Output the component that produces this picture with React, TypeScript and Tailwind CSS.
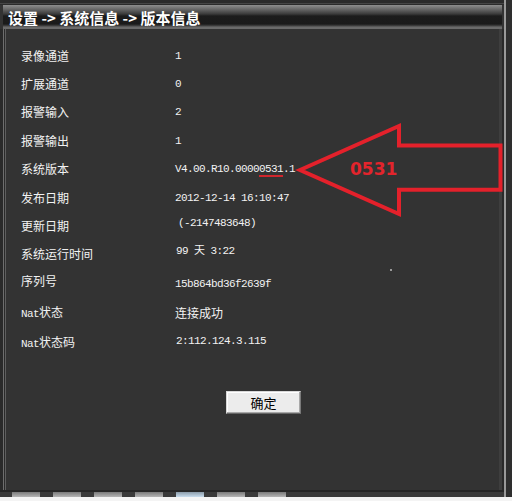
import React from "react";

type Row = {
  label: React.ReactNode;
  value: React.ReactNode;
  mt: string;
  vShift?: string;
  cjkValue?: boolean;
};

const Nat = ({ rest }: { rest: string }) => (
  <>
    <span className="font-['Liberation_Mono',monospace] text-[11px] tracking-[-0.6px]">Nat</span>
    {rest}
  </>
);

export default function App() {
  const rows: Row[] = [
    { label: "录像通道", value: "1", mt: "mt-0" },
    { label: "扩展通道", value: "0", mt: "mt-[8px]" },
    { label: "报警输入", value: "2", mt: "mt-[8px]" },
    { label: "报警输出", value: "1", mt: "mt-[9px]" },
    {
      label: "系统版本",
      value: (
        <>
          V4.00.R10.0000
          <span className="underline decoration-[#d0262d] decoration-2 underline-offset-[3px]">0531</span>
          .1
        </>
      ),
      mt: "mt-[8px]",
    },
    { label: "发布日期", value: "2012-12-14 16:10:47", mt: "mt-[9px]" },
    { label: "更新日期", value: <span className="ml-[3px]">(-2147483648)</span>, mt: "mt-[8px]", vShift: "-translate-y-[3px]" },
    { label: "系统运行时间", value: <span className="ml-[1px]">99 天 3:22</span>, mt: "mt-[8px]", vShift: "-translate-y-[3px]" },
    { label: "序列号", value: "15b864bd36f2639f", mt: "mt-[7px]", vShift: "translate-y-[3px]" },
    { label: <Nat rest="状态" />, value: "连接成功", mt: "mt-[12px]", cjkValue: true },
    { label: <Nat rest="状态码" />, value: <span className="ml-[1px]">2:112.124.3.115</span>, mt: "mt-[10px]", vShift: "-translate-y-[2px]" },
  ];

  const tabs = [0, 1, 2, 3, 4, 5, 6];

  return (
    <div className="w-[512px] h-[501px] bg-[#333333] flex flex-col overflow-hidden relative font-['Noto_Sans_CJK_SC',sans-serif]">
      <div className="flex-1 flex min-h-0">
        {/* main column */}
        <div className="flex-1 flex flex-col min-w-0">
          <div className="h-[5px] bg-[#2b2b2b] flex flex-col">
            <div className="h-[3px]" />
            <div className="h-px bg-[#464646]" />
          </div>
          <div className="h-[24px] ml-[3px] mr-[2px] flex items-center pl-[5px] bg-[linear-gradient(to_bottom,#8e8e8e_0px,#6a6a6a_4px,#3a3a3a_9px,#1c1c1c_11px,#1a1a1a_19px,#444444_21px,#6a6a6a_22px,#6a6a6a_24px)]">
            <span className="text-white font-bold text-[15px] leading-none whitespace-pre">设置 -&gt; 系统信息 -&gt; 版本信息</span>
          </div>
          <div className="flex-1 flex min-h-0">
            <div className="w-[6px] flex">
              <div className="w-[3px] bg-[#2a2a2a]" />
              <div className="w-px bg-[#6e6e6e]" />
              <div className="w-px bg-[#2a2a2a]" />
              <div className="w-px bg-[#5e5e5e]" />
            </div>
            <div className="flex-1 flex flex-col pt-[17px] pl-[15px]">
              {rows.map((r, i) => (
                <div key={i} className={`h-[20px] flex items-center ${r.mt}`}>
                  <div className="w-[154px] text-[12px] text-[#f2f2f2] leading-none whitespace-pre">{r.label}</div>
                  <div
                    className={`${r.vShift ?? ""} leading-none whitespace-pre text-[#f2f2f2] ${
                      r.cjkValue
                        ? "text-[12px]"
                        : "font-['Liberation_Mono','Noto_Sans_CJK_SC',monospace] text-[11px] tracking-[-0.6px]"
                    }`}
                  >
                    {r.value}
                  </div>
                </div>
              ))}
              <button className="mt-[38px] ml-[205px] w-[75px] h-[23px] bg-[#ececec] border border-t-[#d8d8d8] border-l-[#d8d8d8] border-r-[#7a7a7a] border-b-[#666666] shadow-[inset_-1px_-1px_0_#a8a8a8,inset_1px_1px_0_#ffffff] text-[13px] text-black leading-none flex items-center justify-center">
                确定
              </button>
            </div>
            <div className="w-[3px] bg-[#3e3e3e]" />
            <div className="w-[2px] bg-[#2a2a2a]" />
          </div>
          <div className="h-[2px] bg-[#262626]" />
          <div className="h-[5px] bg-[#3a3a3a] flex gap-[13px] pl-[12px]">
            {tabs.map((t) => (
              <div
                key={t}
                className={`w-[28px] h-full ${
                  t === 4
                    ? "bg-[linear-gradient(to_bottom,#8a9aa8,#c8dcec)]"
                    : "bg-[linear-gradient(to_bottom,#7a7a7a,#b4b4b4)]"
                }`}
              />
            ))}
          </div>
        </div>
        {/* right border */}
        <div className="w-[8px] flex">
          <div className="w-[2px] bg-[#9a9a9a]" />
          <div className="flex-1 bg-[#2e2e2e]" />
        </div>
      </div>
      <div className="h-[4px] bg-[#f4f4f4]" />

      {/* annotation arrow */}
      <svg className="absolute left-[290px] top-[115px]" width="216" height="110" viewBox="0 0 216 110">
        <polygon
          points="10,55 109,11 109,30.5 210.5,30.5 210.5,74.7 109,74.7 109,99"
          fill="none"
          stroke="#e4212b"
          strokeWidth="4"
          strokeLinejoin="miter"
          strokeMiterlimit="10"
        />
        <text
          x="83.7"
          y="60"
          textAnchor="middle"
          fill="#e3242c"
          fontFamily="'DejaVu Sans', sans-serif"
          fontWeight="bold"
          fontSize="17"
        >
          0531
        </text>
      </svg>
      <div className="absolute left-[390px] top-[269px] w-[2px] h-[2px] bg-[#9a9a9a]" />
    </div>
  );
}
